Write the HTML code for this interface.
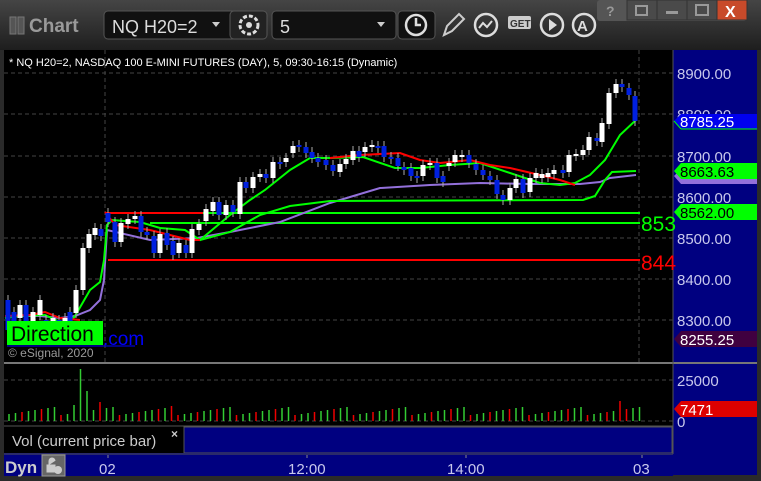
<!DOCTYPE html>
<html><head><meta charset="utf-8">
<style>
body{margin:0;width:761px;height:481px;overflow:hidden;background:#2a2a2a;font-family:"Liberation Sans",sans-serif;}
#top{position:absolute;left:0;top:0;width:761px;height:50px;background:linear-gradient(#454545,#1e1e1e);}
</style></head><body>
<div id="top"></div>
<svg width="761" height="481" style="position:absolute;left:0;top:0" font-family="Liberation Sans, sans-serif">
<rect x="10" y="17" width="6" height="17" fill="#555" stroke="#777"/><rect x="18" y="17" width="6" height="17" fill="#555" stroke="#777"/>
<text x="29" y="32" fill="#9a9a9a" font-size="19" font-weight="bold">Chart</text>
<rect x="104" y="11" width="162" height="28" rx="4" fill="#111" stroke="#555"/>
<text x="112" y="33" fill="#ddd" font-size="18">NQ H20=2</text>
<path d="M212 22 l8 0 -4 5z" fill="#ccc"/>
<rect x="230" y="11" width="37" height="28" rx="4" fill="#222" stroke="#555"/>
<circle cx="249" cy="25" r="9" fill="none" stroke="#ddd" stroke-width="3" stroke-dasharray="4 2"/><circle cx="249" cy="25" r="3" fill="#ddd"/>
<rect x="272" y="11" width="124" height="28" rx="4" fill="#111" stroke="#555"/>
<text x="280" y="33" fill="#ddd" font-size="18">5</text>
<path d="M377 22 l8 0 -4 5z" fill="#ccc"/>
<rect x="398" y="11" width="37" height="28" rx="4" fill="#111" stroke="#555"/>
<circle cx="416" cy="25" r="10" fill="none" stroke="#ddd" stroke-width="2.5"/><path d="M416 18v7h5" stroke="#ddd" stroke-width="2.5" fill="none"/>
<path d="M444 35 l3-9 12-12 5 5 -12 12z" fill="none" stroke="#ccc" stroke-width="2"/>
<circle cx="486" cy="25" r="11" fill="none" stroke="#ddd" stroke-width="2.5"/><path d="M479 28 l4-5 4 4 5-6" stroke="#ddd" stroke-width="2" fill="none"/>
<rect x="508" y="16" width="23" height="13" fill="#ccc" rx="2"/><text x="510" y="27" font-size="10" font-weight="bold" fill="#333">GET</text>
<circle cx="552" cy="25" r="11" fill="none" stroke="#ddd" stroke-width="2.5"/><path d="M549 19v12l8-6z" fill="#ddd"/>
<circle cx="584" cy="25" r="11" fill="none" stroke="#ddd" stroke-width="2.5"/><text x="577" y="31" font-size="15" font-weight="bold" fill="#ddd">A</text>
<rect x="597" y="0" width="150" height="21" fill="#555" rx="3"/>
<rect x="627" y="0" width="30" height="20" fill="#4a4a4a" stroke="#333"/><rect x="657" y="0" width="30" height="20" fill="#4a4a4a" stroke="#333"/><rect x="687" y="0" width="30" height="20" fill="#4a4a4a" stroke="#333"/>
<rect x="717" y="0" width="30" height="20" fill="#c84a2a" stroke="#333"/>
<text x="606" y="16" fill="#999" font-size="14" font-weight="bold">?</text>
<rect x="636" y="6" width="11" height="9" fill="none" stroke="#999" stroke-width="2"/>
<rect x="666" y="11" width="12" height="3" fill="#999"/>
<rect x="696" y="5" width="12" height="10" fill="none" stroke="#999" stroke-width="2"/>
<text x="725" y="17" fill="#fff" font-size="16" font-weight="bold">X</text>
<rect x="4" y="50" width="669" height="312" fill="#000"/>
<rect x="673" y="50" width="84" height="425" fill="#000080"/>
<rect x="4" y="364" width="669" height="62" fill="#000"/>
<rect x="4" y="362" width="753" height="2" fill="#777"/>
<rect x="4" y="426" width="180" height="27" fill="#000"/>
<rect x="184" y="427" width="488" height="26" fill="#000080" stroke="#555"/>
<rect x="4" y="453" width="669" height="23" fill="#000080"/>
<line x1="4" y1="426" x2="673" y2="426" stroke="#555"/>
<line x1="4" y1="454" x2="673" y2="454" stroke="#555"/>
<line x1="673" y1="50" x2="673" y2="454" stroke="#555"/>
<g stroke="#444" stroke-dasharray="4 3">
<line x1="4" y1="73" x2="673" y2="73"/><line x1="4" y1="114" x2="673" y2="114"/><line x1="4" y1="156" x2="673" y2="156"/><line x1="4" y1="197" x2="673" y2="197"/><line x1="4" y1="238" x2="673" y2="238"/><line x1="4" y1="279" x2="673" y2="279"/><line x1="4" y1="320" x2="673" y2="320"/>
<line x1="4" y1="380" x2="673" y2="380"/><line x1="4" y1="421" x2="673" y2="421"/>
<line x1="105" y1="50" x2="105" y2="362"/><line x1="639" y1="50" x2="639" y2="362"/>
</g>
<g id="ch"></g>
<text x="9" y="66" fill="#fff" font-size="11">* NQ H20=2, NASDAQ 100 E-MINI FUTURES (DAY), 5, 09:30-16:15 (Dynamic)</text>
<text x="641" y="231" fill="#0f0" font-size="21">853</text>
<text x="641" y="270" fill="#f00" font-size="21">844</text>
<rect x="7" y="321" width="96" height="24" fill="#0f0"/>
<text x="11" y="341" fill="#000" font-size="21">Direction</text>
<text x="103" y="345" fill="#00f" font-size="19">.com</text>
<line x1="7" y1="346" x2="135" y2="346" stroke="#00f"/>
<text x="8" y="357" fill="#999" font-size="12">© eSignal, 2020</text>
<g fill="#c8c8ec" font-size="15">
<text x="677" y="79">8900.00</text><text x="677" y="120">8800.00</text><text x="677" y="162">8700.00</text><text x="677" y="203">8600.00</text><text x="677" y="244">8500.00</text><text x="677" y="285">8400.00</text><text x="677" y="326">8300.00</text><text x="677" y="386">25000</text><text x="677" y="427">0</text>
</g>
<path d="M674 121 l7-7 h76 v15 h-76z" fill="#0000ee"/><line x1="674" y1="121" x2="681" y2="129" stroke="#0f0"/><line x1="681" y1="129" x2="757" y2="129" stroke="#0f0"/>
<text x="680" y="127" fill="#fff" font-size="15">8785.25</text>
<path d="M674 176 l7-7 h76 v15 h-76z" fill="#9370db"/>
<path d="M674 171 l7-8 h76 v16 h-76z" fill="#0f0"/><text x="680" y="177" fill="#000" font-size="15">8663.63</text>
<path d="M674 212 l7-8 h76 v16 h-76z" fill="#0f0"/><text x="680" y="218" fill="#000" font-size="15">8562.00</text>
<path d="M674 339 l7-8 h76 v16 h-76z" fill="#400040"/><text x="680" y="345" fill="#fff" font-size="15">8255.25</text>
<path d="M674 409 l7-8 h76 v16 h-76z" fill="#d00"/><text x="680" y="415" fill="#fff" font-size="15">7471</text>
<text x="12" y="446" fill="#ccc" font-size="15">Vol (current price bar)</text>
<text x="171" y="438" fill="#ccc" font-size="12" font-weight="bold">×</text>
<text x="5" y="473" fill="#ccc" font-size="17" font-weight="bold">Dyn</text>
<rect x="42" y="455" width="23" height="21" fill="#666" stroke="#999"/><path d="M47 472v-7h8v7zM49 465v-4a3 3 0 0 1 6 0" fill="#ccc" stroke="#ccc"/><circle cx="58" cy="470" r="4" fill="#ccc"/>
<g fill="#c8c8ec" font-size="15"><text x="99" y="474">02</text><text x="288" y="474">12:00</text><text x="447" y="474">14:00</text><text x="633" y="474">03</text></g>
<g stroke="#888"><line x1="108" y1="455" x2="108" y2="458"/><line x1="307" y1="455" x2="307" y2="458"/><line x1="466" y1="455" x2="466" y2="458"/><line x1="642" y1="455" x2="642" y2="458"/></g>
</svg>
<script>
var g=document.getElementById('ch'),s='';
function L(p,c,w){s+='<polyline points="'+p+'" fill="none" stroke="'+c+'" stroke-width="'+(w||2)+'"/>';}
L('105,213 203,213','#f00');L('203,213 640,213','#0f0');L('150,223 640,223','#0f0');L('108,260 640,260','#f00');
L('5,316 40,316 60,318 75,316 90,310 100,300 104,280 107,230 150,240 197,238 230,232 280,222 330,203 380,188 430,185 480,183 530,184 580,184 600,182 610,178 636,175','#9370db');
L('200,240 230,232 260,215 290,206 330,201 583,200 595,196 605,180 612,172 636,171','#0f0');
L('5,318 20,316 45,315 60,322 70,322 75,316 90,290 100,282 104,260 107,225 112,220 125,221 140,222 160,228 185,230 200,240 230,215 250,200 265,190 290,170 310,158 330,158 363,157 395,168 420,168 450,165 480,163 540,183 560,185 575,183 590,175 605,160 620,135 636,120','#0f0');
L('5,316 30,315 45,312 60,318 80,320','#f00');
L('105,212 115,225 150,230 170,235 190,240 200,240','#f00');
L('330,158 360,155 400,153 420,160 440,163 470,160 490,165 510,168 540,175 560,180 575,185','#f00');
var c=[[8,300,330],[14,312,325],[20,318,305],[26,305,330],[33,325,312],[40,315,300],[46,320,335],[53,330,318],[59,320,335],[65,330,318],[70,312,330],[76,313,290],[83,290,248],[89,248,234],[95,235,228],[101,229,236],[108,213,222],[115,222,242],[121,242,223],[128,224,219],[135,219,216],[141,216,232],[147,232,235],[154,236,253],[160,253,234],[167,233,245],[173,241,255],[179,253,243],[186,245,253],[192,253,229],[199,230,224],[206,221,209],[213,211,202],[219,202,215],[226,215,205],[233,205,212],[240,214,182],[246,182,188],[253,188,177],[260,177,174],[266,174,178],[273,178,162],[280,162,163],[286,162,158],[293,153,146],[299,145,147],[306,147,153],[312,152,158],[318,158,162],[326,160,165],[333,165,171],[340,172,164],[346,164,159],[353,160,151],[359,151,157],[365,152,147],[372,147,145],[378,146,147],[384,146,157],[391,157,159],[398,158,166],[404,167,170],[411,168,176],[417,176,177],[423,176,165],[430,164,163],[437,163,178],[443,176,182],[449,166,163],[455,162,155],[462,157,155],[469,155,163],[476,164,170],[483,170,175],[490,176,180],[497,180,194],[503,195,200],[510,200,188],[516,188,179],[523,179,193],[530,192,178],[536,178,173],[542,178,174],[548,177,173],[554,174,170],[563,170,173],[569,172,155],[576,156,154],[583,155,150],[589,150,137],[597,138,141],[602,142,123],[609,124,93],[616,93,84],[622,84,87],[629,88,95],[635,96,121]];
c.forEach(function(k){var x=k[0],o=k[1],cl=k[2],up=cl<o,t=Math.min(o,cl),h=Math.max(Math.abs(o-cl),2);
s+='<line x1="'+x+'" y1="'+(t-5)+'" x2="'+x+'" y2="'+(t+h+5)+'" stroke="#aaa"/>';
s+='<rect x="'+(x-2.5)+'" y="'+t+'" width="5" height="'+h+'" fill="'+(up?'#fff':'#0020e0')+'"/>';});
var vx,i=0;
for(vx=9;vx<640;vx+=6.5){i++;var h=6+((i*37)%9);var col=((i*7)%3==0)?'#e00':'#3c3';
if(Math.abs(vx-82)<3){h=52;col='#3c3';}else if(Math.abs(vx-88)<3){h=30;col='#3c3';}else if(Math.abs(vx-102)<3)h=19;else if(Math.abs(vx-75)<3){h=16;col='#3c3';}else if(Math.abs(vx-174)<3){h=15;col='#e00';}else if(Math.abs(vx-620)<4){h=20;col='#e00';}
s+='<line x1="'+vx+'" y1="421" x2="'+vx+'" y2="'+(421-h)+'" stroke="'+col+'" stroke-width="1.5"/>';}
g.innerHTML=s;
</script>
</body></html>
